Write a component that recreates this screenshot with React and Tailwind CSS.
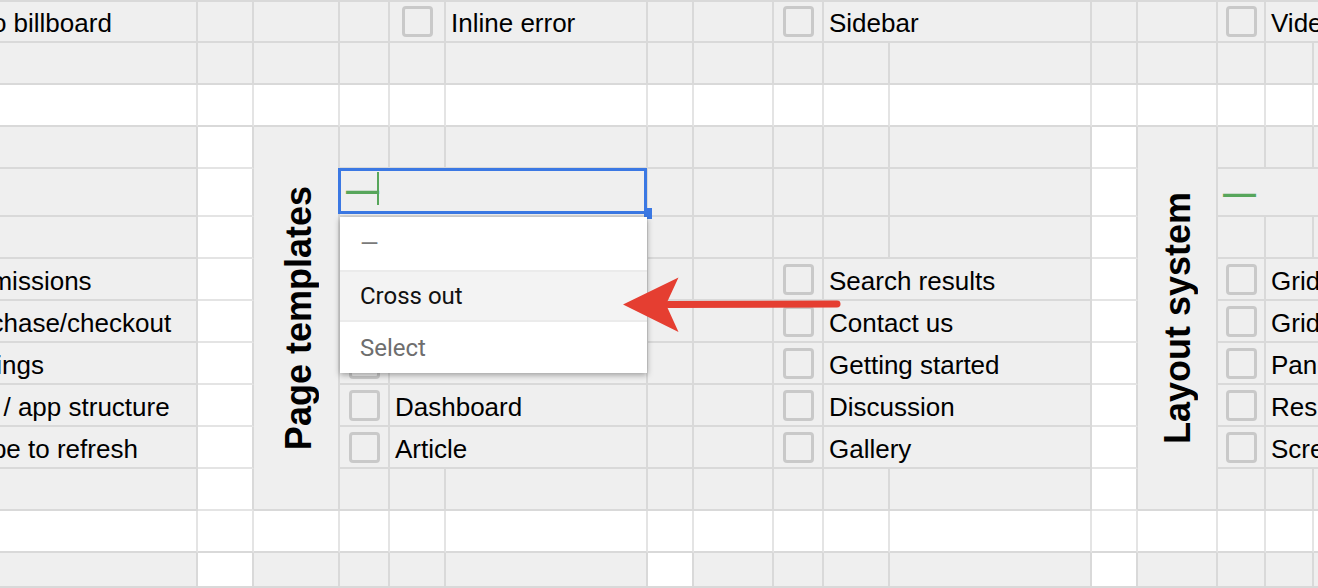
import React from 'react';

const spanCls = { 1: '', 2: 'col-span-2', 3: 'col-span-3' };

function Checkbox() {
  return (
    <div className="flex h-full items-center justify-center">
      <div className="h-[31px] w-[31px] rounded-[4px] border-[3px] border-[#c9c9c9]" />
    </div>
  );
}

function Txt({ children }) {
  return (
    <div className="flex h-full items-end whitespace-nowrap pb-[2px] pl-[5px] text-[26px] leading-[normal] text-black">
      {children}
    </div>
  );
}

function Label({ children, pad }) {
  return (
    <div className={'flex h-full items-center justify-center ' + pad}>
      <div className="rotate-180 whitespace-nowrap text-[36px] font-bold leading-[normal] text-black [writing-mode:vertical-rl]">
        {children}
      </div>
    </div>
  );
}

function Selected() {
  return (
    <div className="relative h-full">
      <div className="absolute left-[-2px] top-[-1px] z-[5] flex h-[46px] w-[309px] items-start border-[3px] border-[#3b78e3] bg-[#efefef] pl-[5px]">
        <span className="mt-[2px] text-[33px] font-bold leading-none text-[#57a65b]">—</span>
        <span className="ml-[-2px] mt-[1px] h-[33px] w-[2px] bg-[#57a65b]" />
      </div>
    </div>
  );
}

function Cell({ c }) {
  const white = !!c.w;
  const cls = [
    'min-w-0 border-b-2 border-r-2',
    white ? 'bg-white' : 'bg-[#efefef]',
    c.lr ? 'border-r-[#e4e4e4]' : 'border-r-[#d9d9d9]',
    c.lb ? 'border-b-[#e4e4e4]' : 'border-b-[#d9d9d9]',
    spanCls[c.s || 1],
    c.label ? 'row-span-9' : '',
  ].join(' ');
  let inner = null;
  if (c.t) inner = <Txt>{c.t}</Txt>;
  if (c.cb) inner = <Checkbox />;
  if (c.label) inner = <Label pad={c.pad}>{c.label}</Label>;
  if (c.sel) inner = <Selected />;
  if (c.dash)
    inner = (
      <div className="flex h-full items-end pb-[3px] pl-[5px]">
        <span className="text-[33px] font-bold leading-[normal] text-[#57a65b]">—</span>
      </div>
    );
  return <div className={cls}>{inner}</div>;
}

const E = {};
const W = { w: true, lr: true };
const WB = { w: true, lb: true };
const CB = { cb: true };
const fill = (n, v) => Array.from({ length: n }, () => v);

const listRows = [
  ['Permissions', '', 'Search results', 'Grid system'],
  ['Purchase/checkout', '', 'Contact us', 'Grid columns'],
  ['Settings', '', 'Getting started', 'Panels'],
  ['Nav / app structure', 'Dashboard', 'Discussion', 'Responsive'],
  ['Swipe to refresh', 'Article', 'Gallery', 'Screen sizes'],
];

const rows = [
  [
    { t: 'Hero billboard' }, E, E, E, CB, { t: 'Inline error' }, E, E, CB,
    { s: 2, t: 'Sidebar' }, E, E, CB, { s: 2, t: 'Video player' },
  ],
  fill(16, E),
  fill(16, W),
  [
    E, WB, { label: 'Page templates', pad: 'pl-[5px]' }, E, E, E, E, E, E, E, E, WB,
    { label: 'Layout system', pad: 'pl-[2px]' }, E, E, E,
  ],
  [E, WB, { s: 3, sel: true }, E, E, E, E, E, WB, { s: 3, dash: true }],
  [E, WB, E, E, E, E, E, E, E, E, WB, E, E, E],
  ...listRows.map((r) => [
    { t: r[0] }, WB, CB, { s: 2, t: r[1] }, E, E, CB, { s: 2, t: r[2] }, WB, CB, { s: 2, t: r[3] },
  ]),
  [E, WB, E, E, E, E, E, E, E, E, WB, E, E, E],
  fill(16, W),
  [E, { w: true }, E, E, E, E, { w: true }, E, E, E, E, { w: true }, E, E, E, E],
];

export default function App() {
  const cells = [];
  rows.forEach((r, ri) => r.forEach((c, ci) => cells.push(<Cell key={ri + '-' + ci} c={c} />)));
  return (
    <div className="relative h-[588px] w-[1318px] overflow-hidden bg-white font-['Liberation_Sans',Arial,sans-serif]">
      <div className="ml-[-55px] grid w-[1489px] grid-cols-[253px_56px_86px_50px_56px_202px_46px_80px_50px_66px_202px_46px_80px_48px_48px_120px] grid-rows-[41px_42px_42px_42px_48px_42px_42px_42px_42px_42px_42px_42px_42px_35px] border-t-2 border-t-[#d9d9d9]">
        {cells}
      </div>

      {/* fill handle */}
      <div className="absolute left-[644px] top-[208px] z-[6] h-[11px] w-[8px] bg-[#3b78e3]" />

      {/* dropdown */}
      <div className="absolute left-[340px] top-[217px] z-10 w-[307px] bg-white font-['Roboto',sans-serif] shadow-[0_2px_6px_rgba(0,0,0,0.35)]">
        <div className="flex h-[53px] items-center pl-[20px] text-[24px] text-[#7a7a7a]">—</div>
        <div className="flex h-[52px] items-center border-y-2 border-[#ebebeb] bg-[#f3f3f3] pl-[20px] text-[24px] text-[#111]">
          Cross out
        </div>
        <div className="flex h-[51px] items-center pl-[20px] text-[24px] text-[#6e6e6e]">Select</div>
      </div>

      {/* annotation arrow */}
      <svg
        className="pointer-events-none absolute left-0 top-0 z-20"
        width="1318"
        height="588"
        viewBox="0 0 1318 588"
      >
        <line x1="668" y1="304.5" x2="837" y2="304" stroke="#e53e31" strokeWidth="7" strokeLinecap="round" />
        <polygon points="623,304.5 678.5,277.5 666,304.5 678.5,332" fill="#e53e31" />
      </svg>
    </div>
  );
}
